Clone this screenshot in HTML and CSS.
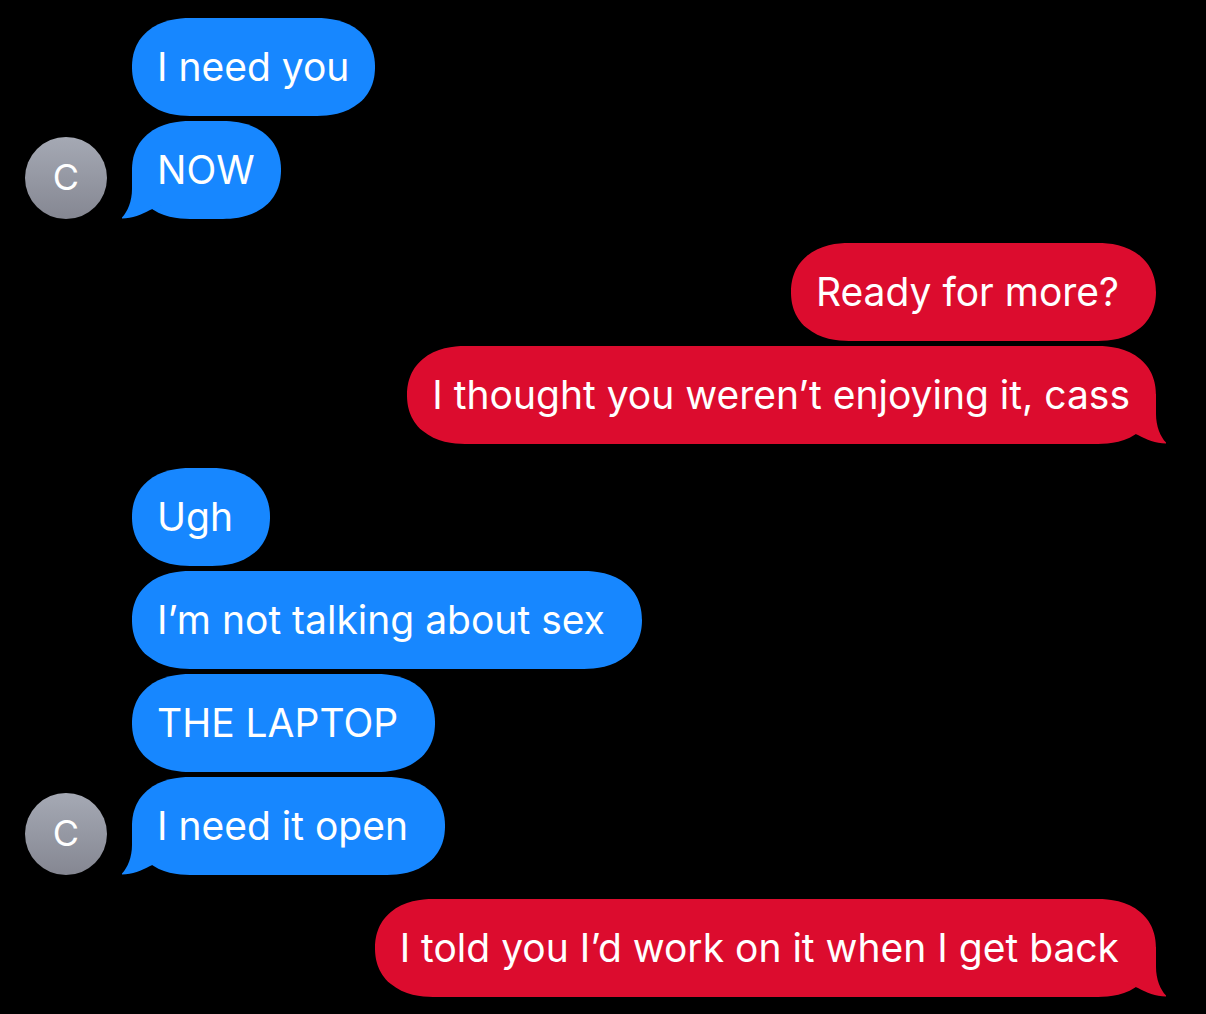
FILE: index.html
```html
<!DOCTYPE html>
<html lang="en">
<head>
  <meta charset="UTF-8">
  <meta name="viewport" content="width=device-width, initial-scale=1">
  <title>Messages</title>
  <link rel="stylesheet" href="styles.css">
</head>
<body>
  <!-- shared bubble tail, flipped for sent messages -->
  <svg class="defs" width="0" height="0" aria-hidden="true">
    <symbol id="tail" viewBox="0 0 40 50">
      <path d="M10 0V20C10 33 5 44 -1 49.500C10 49.500 19 46 28 41L40 36V0Z"/>
    </symbol>
  </svg>

  <main class="chat">
    <section class="group received">
      <div class="avatar">C</div>
      <div class="messages">
        <p class="bubble">I need you</p>
        <p class="bubble">NOW<svg class="tail" aria-hidden="true"><use href="#tail"/></svg></p>
      </div>
    </section>

    <section class="group sent">
      <div class="messages">
        <p class="bubble roomy">Ready for more?</p>
        <p class="bubble">I thought you weren’t enjoying it, cass<svg class="tail" aria-hidden="true"><use href="#tail"/></svg></p>
      </div>
    </section>

    <section class="group received">
      <div class="avatar">C</div>
      <div class="messages">
        <p class="bubble roomy">Ugh</p>
        <p class="bubble roomy">I’m not talking about sex</p>
        <p class="bubble roomy">THE LAPTOP</p>
        <p class="bubble roomy">I need it open<svg class="tail" aria-hidden="true"><use href="#tail"/></svg></p>
      </div>
    </section>

    <section class="group sent">
      <div class="messages">
        <p class="bubble roomy">I told you I’d work on it when I get back<svg class="tail" aria-hidden="true"><use href="#tail"/></svg></p>
      </div>
    </section>
  </main>
</body>
</html>
```
FILE: styles.css
```css
* {
  box-sizing: border-box;
}

body {
  margin: 0;
  background-color: #000;
  color: #fff;
  font-family: Inter, "Liberation Sans", sans-serif;
}

.defs {
  position: absolute;
}

.chat {
  display: flex;
  flex-direction: column;
  gap: 24px;
  padding: 18px 50px 17px 25px;
}

.group {
  display: flex;
  align-items: flex-end;
  gap: 25px;
}

.sent {
  justify-content: flex-end;
}

.messages {
  display: flex;
  flex-direction: column;
  align-items: flex-start;
  gap: 5px;
}

.sent .messages {
  align-items: flex-end;
}

.avatar {
  flex: none;
  width: 82px;
  height: 82px;
  border-radius: 50%;
  background: linear-gradient(#a5a9b4, #858792);
  font-size: 36px;
  line-height: 80px;
  text-align: center;
}

.bubble {
  position: relative;
  isolation: isolate;
  margin: 0;
  padding: 25px 26px 25px 25px;
  border-radius: 58px / 49px;
  corner-shape: superellipse(1.15);
  background-color: #1787ff;
  font-size: 39px;
  line-height: 48px;
}

.sent .bubble {
  background-color: #dc0c2e;
}

/* extra room after the last word */
.bubble.roomy {
  padding-right: 37px;
}

.tail {
  position: absolute;
  z-index: -1;
  left: -10px;
  bottom: 0;
  width: 40px;
  height: 50px;
  overflow: visible;
  fill: #1787ff;
}

.sent .tail {
  left: auto;
  right: -10px;
  fill: #dc0c2e;
  transform: scaleX(-1);
}
```
